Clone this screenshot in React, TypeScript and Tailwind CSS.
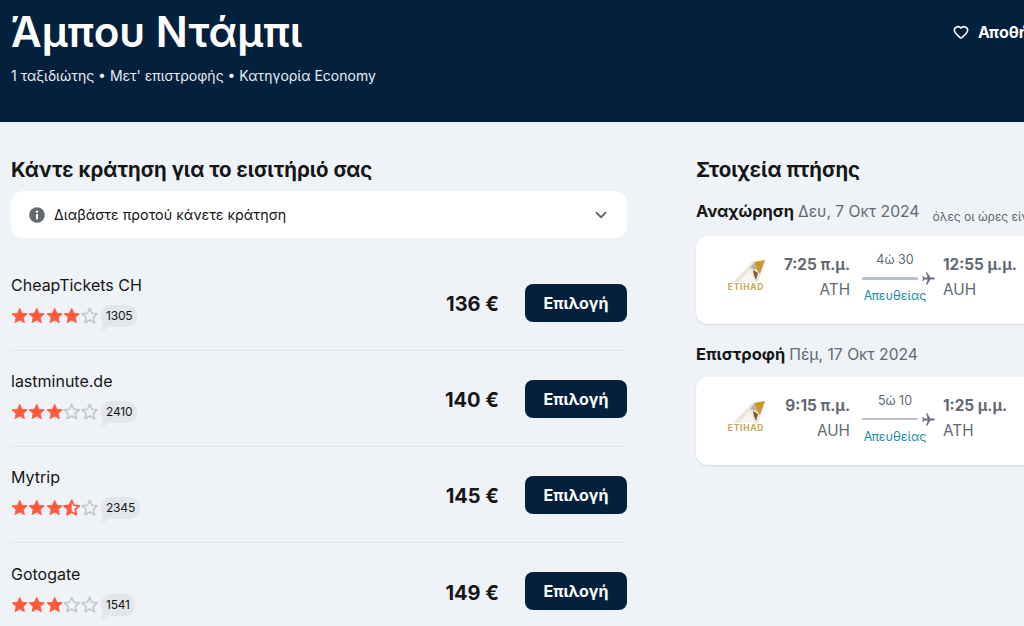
import { ChevronDown, Heart } from "lucide-react"

const font = { fontFamily: "Inter, 'Noto Sans', sans-serif" }

const agents = [
  { name: "CheapTickets CH", rating: 4, count: "1305", price: "136 €" },
  { name: "lastminute.de", rating: 3, count: "2410", price: "140 €" },
  { name: "Mytrip", rating: 3.5, count: "2345", price: "145 €" },
  { name: "Gotogate", rating: 3, count: "1541", price: "149 €" },
]

const STAR =
  "M8 1.2l2.05 4.5 4.9.55-3.65 3.3 1 4.85L8 11.95 3.7 14.4l1-4.85L1.05 6.25l4.9-.55z"

function Star({ fill }: { fill: "full" | "half" | "empty" }) {
  if (fill === "full") {
    return (
      <svg viewBox="0 0 16 16" className="h-[17.5px] w-[17.5px]">
        <path d={STAR} fill="#ff5a3c" stroke="#ff5a3c" strokeWidth="0.8" strokeLinejoin="round" />
      </svg>
    )
  }
  return (
    <svg viewBox="0 0 16 16" className="h-[17.5px] w-[17.5px]">
      <path d={STAR} fill="none" stroke="#c2c9cd" strokeWidth="1.5" strokeLinejoin="round" />
      {fill === "half" && (
        <>
          <path d={STAR} fill="none" stroke="#ff5a3c" strokeWidth="1.5" strokeLinejoin="round" />
          <path d="M8 1.2v10.75L3.7 14.4l1-4.85L1.05 6.25l4.9-.55z" fill="#ff5a3c" />
        </>
      )}
    </svg>
  )
}

function Rating({ value, count }: { value: number; count: string }) {
  return (
    <div className="flex items-center">
      <div className="flex w-[87px]">
        {[0, 1, 2, 3, 4].map((i) => (
          <Star key={i} fill={value >= i + 1 ? "full" : value >= i + 0.5 ? "half" : "empty"} />
        ))}
      </div>
      <div className="relative ml-[3px] flex h-[22px] items-center rounded-[10px] bg-[#e3e7ec] px-[5px] text-[12px] tracking-[-0.2px] text-[#161616]">
        {count}
        <svg viewBox="0 0 8 8" className="absolute -bottom-[4px] left-0 h-2 w-2">
          <path d="M0 8 L1 0 L8 2 Q6 7 0 8z" fill="#e3e7ec" />
        </svg>
      </div>
    </div>
  )
}

function AgentRow({ agent, last }: { agent: (typeof agents)[number]; last: boolean }) {
  return (
    <div className={`flex h-[96px] items-center justify-between ${last ? "" : "border-b border-[#e3e6eb]"}`}>
      <div className="flex flex-col gap-[10px] pb-[3px]">
        <div className="text-[16px] leading-[20px] text-[#161616]">{agent.name}</div>
        <Rating value={agent.rating} count={agent.count} />
      </div>
      <div className="flex items-center gap-[26px]">
        <div className="pt-[3px] text-[20px] font-bold text-[#161616]">{agent.price}</div>
        <button className="flex h-[38px] w-[102px] items-center justify-center rounded-lg bg-[#05203c] text-[16px] font-bold text-white">
          Επιλογή
        </button>
      </div>
    </div>
  )
}

function EtihadLogo() {
  return (
    <div className="mb-[5px] flex w-[38px] flex-col items-center">
      <svg viewBox="0 0 38 22" className="h-[22px] w-[38px]">
        <path d="M6 22 L25 2 L38 0 L31 22z" fill="#ebe7df" />
        <path d="M12 22 L23 10 L28 22z" fill="#f8f6f2" />
        <path d="M27 2 L38 0 L33 14 L30 10z" fill="#c99a2e" />
        <path d="M23 8 L27 3 L30 10 Z" fill="#b9b3a6" />
        <path d="M26 10 L31 13 L29 20 L27 15z" fill="#7b5a30" />
      </svg>
      <div className="mt-[1px] text-[8.5px] leading-[8px] font-bold tracking-[0.7px] whitespace-nowrap text-[#c8a655]">ETIHAD</div>
    </div>
  )
}

function Plane() {
  return (
    <svg viewBox="0 0 24 24" className="ml-[3px] h-[15px] w-[15px] shrink-0" fill="#6f6b82">
      <path d="M22 12c0-.9-.8-1.5-1.6-1.5H15L9.8 2H8l2.6 8.5H5.4L3.6 8H2l1.2 4L2 16h1.6l1.8-2.5h5.2L8 22h1.8l5.2-8.5h5.4c.8 0 1.6-.6 1.6-1.5z" />
    </svg>
  )
}

function Leg({ dep, from, dur, arr, to, thick }: { dep: string; from: string; dur: string; arr: string; to: string; thick: boolean }) {
  return (
    <div className="flex h-[88px] items-center rounded-xl bg-white pb-[4px] pl-[31px] shadow-[0_1px_2px_rgba(37,32,31,0.12)]">
      <EtihadLogo />
      <div className="ml-[17px] w-[68px] text-right">
        <div className="text-[15.3px] leading-[20px] font-bold whitespace-nowrap text-[#626971]">{dep}</div>
        <div className="mt-[5px] text-[15.3px] leading-[20px] text-[#626971]">{from}</div>
      </div>
      <div className="ml-[12px] flex w-[74px] flex-col">
        <div className="w-[66px] text-center text-[12.5px] leading-[16px] text-[#626971]">{dur}</div>
        <div className="mt-[3px] flex w-full items-center">
          <div className={`w-[56px] rounded-full bg-[#b9bfca] ${thick ? "h-[3px]" : "h-[2px]"}`} />
          <Plane />
        </div>
        <div className="mt-[2px] w-[66px] text-center text-[12.5px] leading-[16px] whitespace-nowrap text-[#1c8f9e]">Απευθείας</div>
      </div>
      <div className="ml-[7px]">
        <div className="text-[15.3px] leading-[20px] font-bold whitespace-nowrap text-[#626971]">{arr}</div>
        <div className="mt-[5px] text-[15.3px] leading-[20px] text-[#626971]">{to}</div>
      </div>
    </div>
  )
}

export default function App() {
  return (
    <div className="h-[626px] w-[1024px] overflow-hidden bg-[#eff3f8]" style={font}>
      <header className="flex h-[122px] items-start justify-between overflow-hidden bg-[#05203c] pl-[11px] text-white">
        <div>
          <h1 className="mt-[8px] text-[42.2px] leading-[48px] font-semibold">Άμπου Ντάμπι</h1>
          <p className="mt-[10px] text-[14px] leading-[20px] text-[#e8edf2]">
            1 ταξιδιώτης • Μετ' επιστροφής • Κατηγορία Economy
          </p>
        </div>
        <div className="mt-[20px] flex w-[71px] shrink-0 items-center gap-[9px] overflow-hidden whitespace-nowrap">
          <Heart className="h-[16px] w-[16px] shrink-0" strokeWidth={2.4} />
          <span className="text-[16px] font-bold">Αποθήκευση</span>
        </div>
      </header>

      <main className="flex pl-[11px]">
        <section className="w-[616px] shrink-0">
          <h2 className="mt-[35px] text-[20.4px] leading-[26px] font-bold text-[#161616]">
            Κάντε κράτηση για το εισιτήριό σας
          </h2>
          <div className="mt-[8px] flex h-[47px] items-center justify-between rounded-xl bg-white pr-[17px] pl-[18px]">
            <div className="flex items-center gap-[9px]">
              <svg viewBox="0 0 16 16" className="h-[16px] w-[16px]">
                <circle cx="8" cy="8" r="7.8" fill="#626971" />
                <circle cx="8" cy="4.6" r="1.2" fill="#fff" />
                <rect x="7" y="7" width="2" height="5.4" rx="0.6" fill="#fff" />
              </svg>
              <span className="text-[14.3px] text-[#161616]">Διαβάστε προτού κάνετε κράτηση</span>
            </div>
            <ChevronDown className="h-[18px] w-[18px] text-[#626971]" strokeWidth={2.4} />
          </div>
          <div className="mt-[17px]">
            {agents.map((a, i) => (
              <AgentRow key={a.name} agent={a} last={i === agents.length - 1} />
            ))}
          </div>
        </section>

        <aside className="ml-[69px] w-[400px] shrink-0">
          <h2 className="mt-[35px] text-[20.4px] leading-[26px] font-bold text-[#161616]">Στοιχεία πτήσης</h2>
          <div className="mt-[16px] flex items-baseline whitespace-nowrap">
            <span className="text-[16.5px] font-bold text-[#161616]">Αναχώρηση</span>
            <span className="ml-[4px] text-[15.7px] text-[#626971]">Δευ, 7 Οκτ 2024</span>
            <span className="ml-[13px] translate-y-[4px] text-[12px] text-[#626971]">όλες οι ώρες είναι τοπικές</span>
          </div>
          <div className="mt-[12px]">
            <Leg dep="7:25 π.μ." from="ATH" dur="4ώ 30" arr="12:55 μ.μ." to="AUH" thick />
          </div>
          <div className="mt-[18px] text-[16.5px] leading-[24px] whitespace-nowrap">
            <span className="font-bold text-[#161616]">Επιστροφή</span>
            <span className="ml-[4px] text-[15.7px] text-[#626971]">Πέμ, 17 Οκτ 2024</span>
          </div>
          <div className="mt-[10px]">
            <Leg dep="9:15 π.μ." from="AUH" dur="5ώ 10" arr="1:25 μ.μ." to="ATH" thick={false} />
          </div>
        </aside>
      </main>
    </div>
  )
}
